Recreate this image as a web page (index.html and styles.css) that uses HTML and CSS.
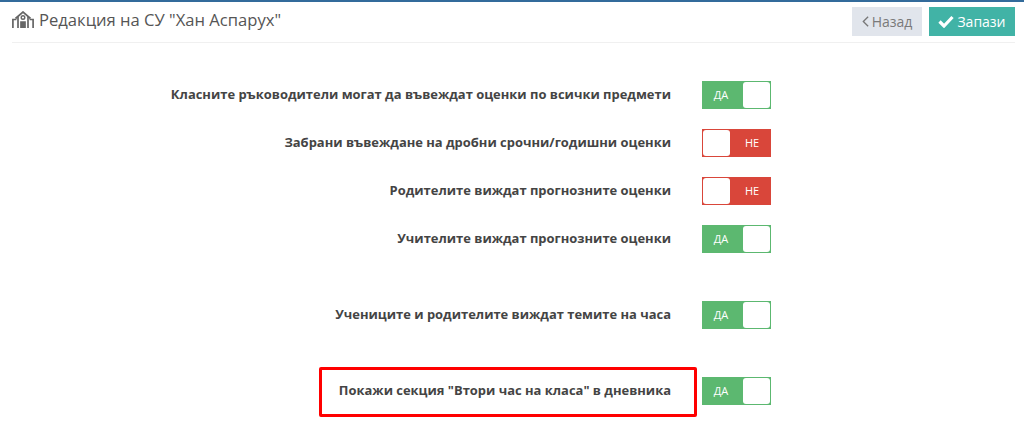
FILE: index.html
```html
<!DOCTYPE html>
<html lang="bg">
<head>
<meta charset="utf-8">
<title>Редакция</title>
<link rel="stylesheet" href="styles.css">
</head>
<body>
<div class="page">
  <header class="head">
    <h1 class="title">
      <svg class="school" viewBox="0 0 22 17" width="22" height="17" fill="none" stroke="#666" stroke-width="1.700">
        <path d="M3.500 7.500 11 1 18.500 7.500"/>
        <path d="M6 5.500V17M16 5.500V17"/>
        <circle cx="11" cy="6.500" r="1.800" stroke-width="1.400"/>
        <path d="M9 17v-6h4v6" fill="#666"/>
        <path d="M.9 17V8.500h3.500M21.100 17V8.500h-3.500"/>
      </svg>
      <span>Редакция на СУ "Хан Аспарух"</span>
    </h1>
    <div class="actions">
      <button class="btn back"><svg viewBox="0 0 8 14" width="7" height="13" fill="none" stroke="#777" stroke-width="1.500"><path d="M7 1.500 1.500 7 7 12.500"/></svg>Назад</button>
      <button class="btn save"><svg viewBox="0 0 16 13" width="16" height="13" fill="none" stroke="#fff" stroke-width="3.200"><path d="M1.500 6.500 6 11 14.500 2"/></svg>Запази</button>
    </div>
  </header>
  <main class="settings">
    <div class="row"><span class="label">Класните ръководители могат да въвеждат оценки по всички предмети</span><span class="toggle on"><span class="txt">ДА</span><span class="knob"></span></span></div>
    <div class="row"><span class="label">Забрани въвеждане на дробни срочни/годишни оценки</span><span class="toggle off"><span class="knob"></span><span class="txt">НЕ</span></span></div>
    <div class="row"><span class="label">Родителите виждат прогнозните оценки</span><span class="toggle off"><span class="knob"></span><span class="txt">НЕ</span></span></div>
    <div class="row"><span class="label">Учителите виждат прогнозните оценки</span><span class="toggle on"><span class="txt">ДА</span><span class="knob"></span></span></div>
    <div class="row gap"><span class="label">Учениците и родителите виждат темите на часа</span><span class="toggle on"><span class="txt">ДА</span><span class="knob"></span></span></div>
    <div class="row gap"><span class="label boxed">Покажи секция "Втори час на класа" в дневника</span><span class="toggle on"><span class="txt">ДА</span><span class="knob"></span></span></div>
  </main>
</div>
</body>
</html>
```

FILE: styles.css
```css
* { box-sizing: border-box; }
html, body { margin: 0; padding: 0; height: 435px; overflow: hidden; background: #fff; }
body { font-family: "Open Sans", sans-serif; color: #444; }
.page { border-top: 2px solid #336b9b; padding: 4px 9px 0 12px; }
.head { display: flex; justify-content: space-between; align-items: flex-start; height: 37px; border-bottom: 1px solid #f0f0f0; }
.title { margin: 0; display: flex; align-items: center; gap: 5px; height: 27px; font-size: 16.600px; font-weight: 400; color: #555; }
.school { flex: none; }
.actions { display: flex; gap: 7px; margin-top: 1px; }
.btn { display: flex; align-items: center; justify-content: center; gap: 3px; height: 29px; border: 0; padding: 0; font: 400 14px "Open Sans", sans-serif; }
.back { width: 70px; background: #e1e5ec; color: #7a7a7a; }
.save { width: 86px; background: #41b3a6; color: #fff; }
.settings { display: flex; flex-direction: column; padding-top: 38px; }
.row { display: flex; justify-content: flex-end; align-items: center; height: 28px; margin-bottom: 20px; padding-right: 244px; gap: 31px; position: relative; }
.row.gap { margin-top: 28px; }
.label { font-size: 12.950px; font-weight: 700; color: #444; white-space: nowrap; margin-bottom: 2px; }
.boxed::before { content: ""; box-sizing: border-box; position: absolute; left: 307px; top: -10px; width: 378px; height: 50px; border: 3px solid #f00; border-radius: 2px; }
.toggle { display: flex; width: 69px; height: 28px; flex: none; font-size: 11px; align-items: stretch; }
.txt { flex: 1; display: flex; align-items: center; justify-content: center; color: #fff; padding-bottom: 2px; }
.knob { width: 27px; background: #fff; border-radius: 3px; }
.on { background: #5cb870; border: 1px solid #5cb870; }
.off { background: #d9463a; border: 1px solid #d9463a; }
.on .txt { padding-right: 4px; }
.off .txt { padding-left: 4px; }
```
